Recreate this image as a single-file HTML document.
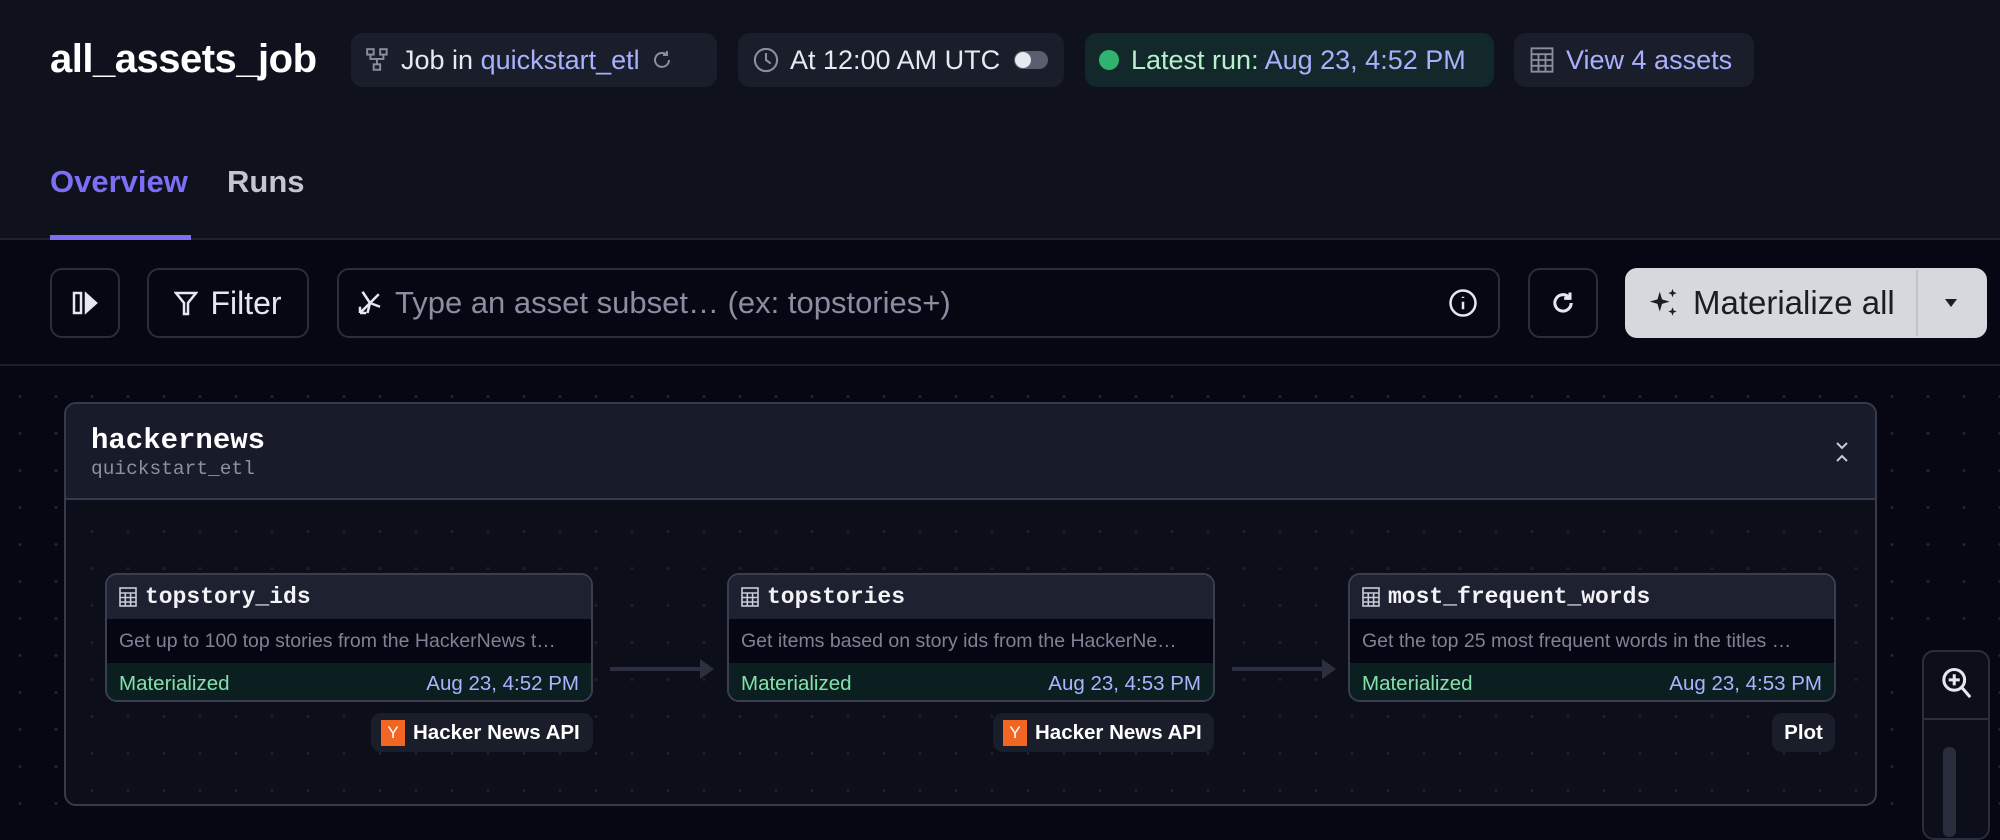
<!DOCTYPE html>
<html><head><meta charset="utf-8"><style>
*{box-sizing:border-box;margin:0;padding:0}
body{width:2000px;height:830px;overflow:hidden;background:#060713;font-family:"Liberation Sans",sans-serif;color:#e6e8ef;position:relative}
.hdr{position:absolute;left:0;top:0;width:2000px;height:240px;background:#0f111d;border-bottom:2px solid #1f2232}
.abs{position:absolute}
.title{left:50px;top:37px;font-size:40px;font-weight:bold;color:#fff;letter-spacing:-0.5px}
.pill{position:absolute;top:33px;height:54px;border-radius:12px;background:#1a1d2a;display:flex;align-items:center;font-size:27px;padding:0 14px;gap:10px;color:#e8e9f0;white-space:nowrap}
.lnk{color:#a9b1ff}
.tab{top:164px;font-size:31px;font-weight:bold}
.btn{position:absolute;top:268px;height:70px;border:2px solid #2a2d3b;border-radius:12px;background:#060713;display:flex;align-items:center;justify-content:center;font-size:32px;color:#e6e8ef;white-space:nowrap}
.canvas{position:absolute;left:0;top:364px;width:2000px;height:466px;border-top:2px solid #1c1f2c;background-color:#060713;background-image:radial-gradient(circle,#22263a 1.3px,transparent 1.6px);background-size:36px 37px;background-position:2px 12px}
.group{position:absolute;left:64px;top:402px;width:1813px;height:404px;border:2px solid #363a4a;border-radius:12px;background:#0c0e1a;background-image:radial-gradient(circle,#1c2033 1.3px,transparent 1.6px);background-size:36px 37px;background-position:-28px -2px;overflow:hidden}
.ghead{position:absolute;left:0;top:0;width:100%;height:96px;background:#181b29;border-bottom:2px solid #363a4a}
.mono{font-family:"Liberation Mono","DejaVu Sans Mono",monospace}
.node{position:absolute;top:573px;width:488px;height:129px;border:2px solid #3a3e4e;border-radius:12px;overflow:hidden;background:#050611}
.nh{height:44px;background:#1e2130;display:flex;align-items:center;padding-left:12px;gap:8px;font-family:"Liberation Mono",monospace;font-weight:bold;font-size:23px;color:#f2f3f7}
.nd{height:44px;display:flex;align-items:center;padding-left:12px;font-size:19.5px;color:#7d8295;white-space:nowrap;overflow:hidden}
.ns{height:41px;background:#0b1f21;display:flex;align-items:center;justify-content:space-between;padding:0 12px;font-size:20.5px}
.ns .g{color:#84e0a9}.ns .b{color:#aab4ff}
.tag{position:absolute;top:713px;height:39px;border-radius:10px;background:#1a1d2a;display:flex;align-items:center;gap:8px;padding:0 10px;font-size:20.5px;font-weight:bold;color:#fff;white-space:nowrap}
.y{width:24px;height:26px;background:#f26522;color:#fff;font-size:17px;font-weight:normal;display:flex;align-items:center;justify-content:center}
.arrow{position:absolute;top:667px;height:4px;background:#2b2f40}
.arrow:after{content:"";position:absolute;right:-14px;top:-8px;border-left:14px solid #2b2f40;border-top:10px solid transparent;border-bottom:10px solid transparent}
</style></head><body>
<div class="hdr"></div>
<div class="abs title">all_assets_job</div>
<div class="pill" style="left:351px;width:366px">
<svg width="26" height="26" viewBox="0 0 24 24" fill="none" stroke="#8a8fa0" stroke-width="1.8"><rect x="2" y="2" width="6" height="5"/><rect x="14" y="2" width="6" height="5"/><rect x="8" y="16" width="6" height="5"/><path d="M5 7v4h6v5M17 7v4h-6"/></svg>
<span>Job in <span class="lnk">quickstart_etl</span></span>
<svg width="24" height="24" viewBox="0 0 24 24" fill="none" stroke="#8a8fa0" stroke-width="2"><path d="M19 12a7 7 0 1 1-2-5M17 3v4h-4"/></svg></div>
<div class="pill" style="left:738px;width:326px">
<svg width="28" height="28" viewBox="0 0 24 24" fill="none" stroke="#8a8fa0" stroke-width="1.8"><circle cx="12" cy="12" r="9.5"/><path d="M12 6v6l4 3"/></svg>
<span>At 12:00 AM UTC</span>
<span style="width:34px;height:18px;border-radius:9px;background:#5a5e6e;position:relative;margin-left:4px;flex:none"><span style="position:absolute;left:1px;top:1px;width:16px;height:16px;border-radius:50%;background:#e8e9ee"></span></span></div>
<div class="pill" style="left:1085px;width:409px;background:#12282b;gap:12px">
<span style="width:20px;height:20px;border-radius:50%;background:#2fb36d;flex:none"></span>
<span style="color:#b8f0cd">Latest run: <span class="lnk">Aug 23, 4:52 PM</span></span></div>
<div class="pill" style="left:1514px;width:240px">
<svg width="28" height="28" viewBox="0 0 24 24" fill="none" stroke="#8a8fa0" stroke-width="1.6"><rect x="3" y="2" width="18" height="20"/><path d="M3 7h18M3 12h18M3 17h18M9 7v15M15 7v15"/></svg>
<span class="lnk">View 4 assets</span></div>
<div class="abs tab" style="left:50px;color:#7c6ff4">Overview</div>
<div class="abs tab" style="left:227px;color:#c3c6d2">Runs</div>
<div class="abs" style="left:50px;top:235px;width:141px;height:5px;background:#7c6ff4"></div>

<div class="canvas"></div>
<div class="btn" style="left:50px;width:70px"><svg width="30" height="28" viewBox="0 0 30 28" fill="none" stroke="#e6e8ef" stroke-width="2.5"><rect x="4" y="4" width="7" height="20"/><path d="M16 5l10 9-10 9z" fill="#e6e8ef"/></svg></div>
<div class="btn" style="left:147px;width:162px;gap:12px"><svg width="24" height="26" viewBox="0 0 24 26" fill="none" stroke="#e6e8ef" stroke-width="2.5"><path d="M2 3h20l-8 10v11h-4V13z"/></svg>Filter</div>
<div class="btn" style="left:337px;width:1163px;justify-content:flex-start;padding-left:16px;gap:10px;color:#8a8ea0;font-size:31px">
<svg width="30" height="30" viewBox="0 0 24 24" fill="none" stroke="#e6e8ef" stroke-width="2"><path d="M12 12L6 3M12 12l7-7M12 12l8 3M12 12l-2 8M12 12L4 20M4 20v-5M4 20h5"/></svg>
<span>Type an asset subset… (ex: topstories+)</span>
<svg style="position:absolute;right:20px" width="30" height="30" viewBox="0 0 24 24" fill="none" stroke="#e6e8ef" stroke-width="2"><circle cx="12" cy="12" r="10"/><path d="M12 11v6M12 7v1"/></svg></div>
<div class="btn" style="left:1528px;width:70px"><svg width="28" height="28" viewBox="0 0 24 24" fill="none" stroke="#e6e8ef" stroke-width="2.6"><path d="M19 12a7 7 0 1 1-2-5M18 3v5h-5"/></svg></div>
<div class="btn" style="left:1625px;width:362px;background:#d6d8de;border-color:#d6d8de;color:#1a1c26;justify-content:flex-start;padding-left:20px;gap:12px;font-size:33px">
<svg width="34" height="34" viewBox="0 0 24 24" fill="#1a1c26"><path d="M9 4l1.6 5.4L16 11l-5.4 1.6L9 18l-1.6-5.4L2 11l5.4-1.6zM18 2l.8 2.2L21 5l-2.2.8L18 8l-.8-2.2L15 5l2.2-.8zM18 15l.8 2.2L21 18l-2.2.8L18 21l-.8-2.2L15 18l2.2-.8z"/></svg>
<span>Materialize all</span>
<span style="position:absolute;left:289px;top:0;width:2px;height:66px;background:#bfc2ca"></span>
<span style="position:absolute;left:318px;top:29px;border-top:8px solid #1a1c26;border-left:6px solid transparent;border-right:6px solid transparent"></span></div>

<div class="group"><div class="ghead"></div></div>
<div class="abs mono" style="left:91px;top:424px;font-size:29px;font-weight:bold;color:#fff">hackernews</div>
<div class="abs mono" style="left:91px;top:458px;font-size:19.5px;color:#8c90a0">quickstart_etl</div>
<svg class="abs" style="left:1834px;top:440px" width="16" height="24" viewBox="0 0 16 24" fill="none" stroke="#c9ccd6" stroke-width="2"><path d="M3 3l5 5 5-5M3 21l5-5 5 5"/></svg>

<div class="node" style="left:105px"><div class="nh"><svg width="18" height="20" viewBox="0 0 18 20" fill="none" stroke="#c9ccd6" stroke-width="1.6"><rect x="1" y="1" width="16" height="18"/><path d="M1 6h16M1 10.5h16M1 15h16M6.3 6v13M11.6 6v13"/></svg>topstory_ids</div><div class="nd">Get up to 100 top stories from the HackerNews t…</div><div class="ns"><span class="g">Materialized</span><span class="b">Aug 23, 4:52 PM</span></div></div>
<div class="node" style="left:727px"><div class="nh"><svg width="18" height="20" viewBox="0 0 18 20" fill="none" stroke="#c9ccd6" stroke-width="1.6"><rect x="1" y="1" width="16" height="18"/><path d="M1 6h16M1 10.5h16M1 15h16M6.3 6v13M11.6 6v13"/></svg>topstories</div><div class="nd">Get items based on story ids from the HackerNe…</div><div class="ns"><span class="g">Materialized</span><span class="b">Aug 23, 4:53 PM</span></div></div>
<div class="node" style="left:1348px"><div class="nh"><svg width="18" height="20" viewBox="0 0 18 20" fill="none" stroke="#c9ccd6" stroke-width="1.6"><rect x="1" y="1" width="16" height="18"/><path d="M1 6h16M1 10.5h16M1 15h16M6.3 6v13M11.6 6v13"/></svg>most_frequent_words</div><div class="nd">Get the top 25 most frequent words in the titles …</div><div class="ns"><span class="g">Materialized</span><span class="b">Aug 23, 4:53 PM</span></div></div>
<div class="arrow" style="left:610px;width:90px"></div>
<div class="arrow" style="left:1232px;width:90px"></div>
<div class="tag" style="left:371px;width:222px"><span class="y">Y</span>Hacker News API</div>
<div class="tag" style="left:993px;width:221px"><span class="y">Y</span>Hacker News API</div>
<div class="tag" style="left:1772px;width:63px;justify-content:center">Plot</div>

<div class="abs" style="left:1922px;top:650px;width:68px;height:190px;border:2px solid #2a2d3b;border-radius:12px;background:#0c0e1a"></div>
<div class="abs" style="left:1924px;top:718px;width:64px;height:2px;background:#2a2d3b"></div>
<svg class="abs" style="left:1940px;top:666px" width="34" height="36" viewBox="0 0 24 26" fill="none" stroke="#e6e8ef" stroke-width="2.2"><circle cx="10" cy="10" r="7.5"/><path d="M10 6v8M6 10h8M15.5 15.5l6 7"/></svg>
<div class="abs" style="left:1943px;top:747px;width:13px;height:90px;border-radius:6px;background:#2a2d3b"></div>
</body></html>
